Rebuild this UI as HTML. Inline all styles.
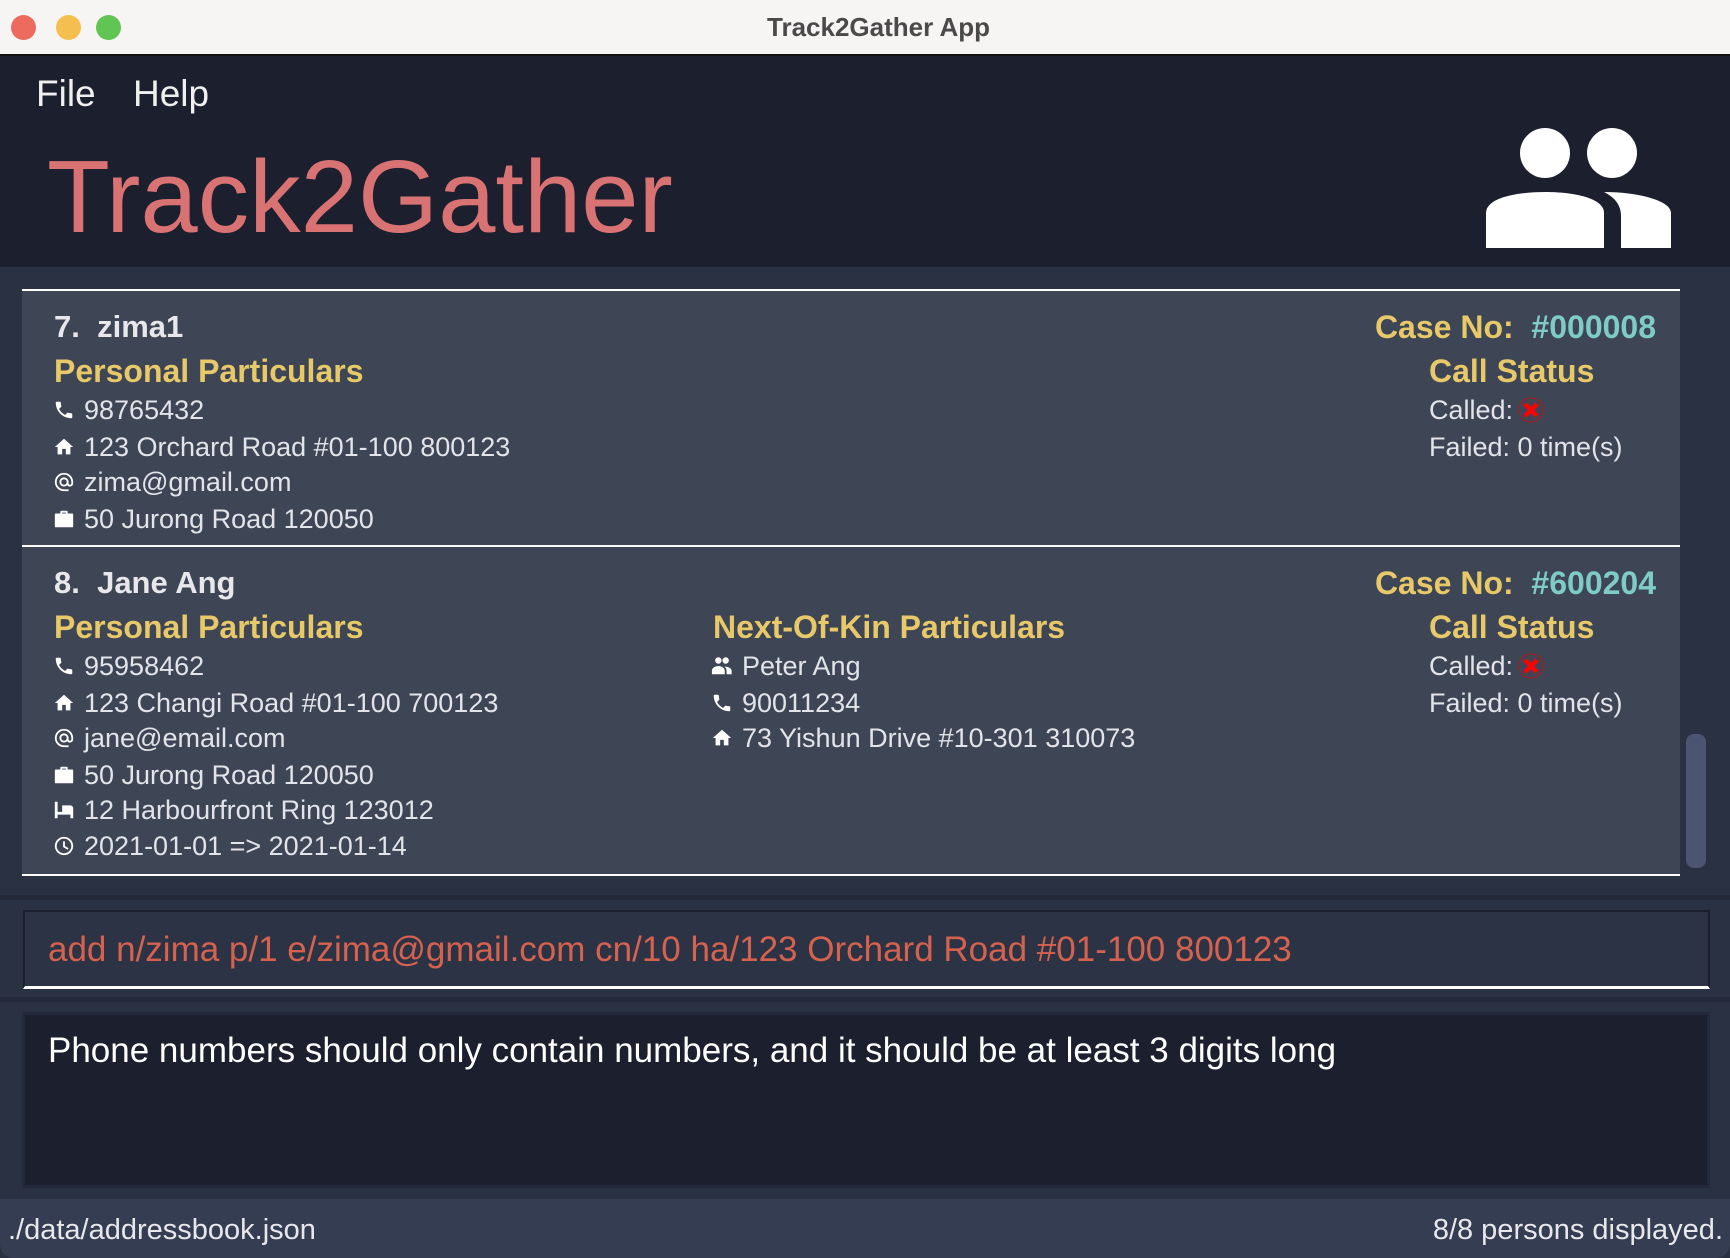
<!DOCTYPE html>
<html><head><meta charset="utf-8"><style>
*{margin:0;padding:0;box-sizing:border-box}
body{width:1730px;height:1258px;background:#2a3142;font-family:"Liberation Sans",sans-serif;position:relative;overflow:hidden}
.a{position:absolute;white-space:nowrap}
.t{color:#e2e4ea;font-size:27px;line-height:36px}
.h{color:#e8c96a;font-size:32px;font-weight:bold;line-height:40px}
.n{color:#e8e8ec;font-size:31px;font-weight:bold;line-height:40px}
svg.i{position:absolute;width:22px;height:22px;fill:#fff}
</style></head><body>
<div class="a" style="left:0;top:0;width:1730px;height:56px;background:#f7f4f4;border-bottom:2px solid #111"></div>
<div class="a" style="left:11px;top:15px;width:25px;height:25px;border-radius:50%;background:#ec6a5e"></div>
<div class="a" style="left:56px;top:15px;width:25px;height:25px;border-radius:50%;background:#f4bf4f"></div>
<div class="a" style="left:96px;top:15px;width:25px;height:25px;border-radius:50%;background:#61c554"></div>
<div class="a" style="left:767px;top:11px;font-size:26px;font-weight:bold;color:#4a4a4a;line-height:32px">Track2Gather App</div>
<div class="a" style="left:0;top:56px;width:1730px;height:211px;background:#1b1f2e"></div>
<div class="a" style="left:36px;top:72px;font-size:37px;color:#f0f0f0;line-height:44px">File</div>
<div class="a" style="left:133px;top:72px;font-size:37px;color:#f0f0f0;line-height:44px">Help</div>
<div class="a" style="left:47px;top:137px;font-size:103px;color:#d97373;line-height:120px;letter-spacing:0">Track2Gather</div>
<svg class="a" style="left:1486px;top:128px" width="185" height="120" viewBox="0 0 185 120">
<circle cx="59" cy="25" r="25" fill="#fff"/><circle cx="126" cy="25" r="25" fill="#fff"/>
<path d="M0 120V85C0 70 30 64 59 64C88 64 118 70 118 85V120Z" fill="#fff"/>
<path d="M135 120V88C135 78 130 70 118 64C150 64 185 72 185 85V120Z" fill="#fff"/>
</svg>
<div class="a" style="left:22px;top:290px;width:1658px;height:586px;background:#3e4555"></div>
<div class="a" style="left:22px;top:289px;width:1658px;height:2px;background:#fff"></div>
<div class="a" style="left:22px;top:545px;width:1658px;height:2px;background:#fff"></div>
<div class="a" style="left:22px;top:874px;width:1658px;height:2px;background:#fff"></div>
<div class="a" style="left:1686px;top:734px;width:20px;height:134px;border-radius:8px;background:#4b5470"></div>

<div class="a n" style="left:54px;top:307px">7.&nbsp; zima1</div>
<div class="a h" style="left:54px;top:351px">Personal Particulars</div>
<div class="a t" style="left:84px;top:392px">98765432</div>
<div class="a t" style="left:84px;top:429px">123 Orchard Road #01-100 800123</div>
<div class="a t" style="left:84px;top:464px">zima@gmail.com</div>
<div class="a t" style="left:84px;top:501px">50 Jurong Road 120050</div>

<div class="a h" style="right:74px;top:307px">Case No:&nbsp; <span style="color:#7fcbc6">#000008</span></div>
<div class="a h" style="left:1429px;top:351px">Call Status</div>
<div class="a t" style="left:1429px;top:392px">Called:</div>
<div class="a t" style="left:1429px;top:429px">Failed: 0 time(s)</div>

<div class="a n" style="left:54px;top:563px">8.&nbsp; Jane Ang</div>
<div class="a h" style="left:54px;top:607px">Personal Particulars</div>
<div class="a t" style="left:84px;top:648px">95958462</div>
<div class="a t" style="left:84px;top:685px">123 Changi Road #01-100 700123</div>
<div class="a t" style="left:84px;top:720px">jane@email.com</div>
<div class="a t" style="left:84px;top:757px">50 Jurong Road 120050</div>
<div class="a t" style="left:84px;top:792px">12 Harbourfront Ring 123012</div>
<div class="a t" style="left:84px;top:828px">2021-01-01 =&gt; 2021-01-14</div>

<div class="a h" style="left:713px;top:607px">Next-Of-Kin Particulars</div>
<div class="a t" style="left:742px;top:648px">Peter Ang</div>
<div class="a t" style="left:742px;top:685px">90011234</div>
<div class="a t" style="left:742px;top:720px">73 Yishun Drive #10-301 310073</div>

<div class="a h" style="right:74px;top:563px">Case No:&nbsp; <span style="color:#7fcbc6">#600204</span></div>
<div class="a h" style="left:1429px;top:607px">Call Status</div>
<div class="a t" style="left:1429px;top:648px">Called:</div>
<div class="a t" style="left:1429px;top:685px">Failed: 0 time(s)</div>

<svg class="a" style="left:1518px;top:397px" width="26" height="26" viewBox="0 0 26 26"><circle cx="13" cy="13" r="12" fill="none" stroke="#e00" stroke-width="1" stroke-dasharray="2 1"/><path d="M7 7L19 19M19 7L7 19" stroke="#f00" stroke-width="4.5"/></svg>
<svg class="a" style="left:1518px;top:653px" width="26" height="26" viewBox="0 0 26 26"><circle cx="13" cy="13" r="12" fill="none" stroke="#e00" stroke-width="1" stroke-dasharray="2 1"/><path d="M7 7L19 19M19 7L7 19" stroke="#f00" stroke-width="4.5"/></svg>

<svg class="i" style="left:53px;top:399px" viewBox="0 0 24 24"><path d="M6.6 10.8c1.4 2.8 3.8 5.1 6.6 6.6l2.2-2.2c.3-.3.7-.4 1-.2 1.1.4 2.3.6 3.6.6.6 0 1 .4 1 1V20c0 .6-.4 1-1 1C10.6 21 3 13.4 3 4c0-.6.4-1 1-1h3.5c.6 0 1 .4 1 1 0 1.3.2 2.5.6 3.6.1.3 0 .7-.2 1z"/></svg>
<svg class="i" style="left:53px;top:436px" viewBox="0 0 24 24"><path d="M10 20v-6h4v6h5v-8h3L12 3 2 12h3v8z"/></svg>
<svg class="i" style="left:53px;top:471px" viewBox="0 0 24 24"><path d="M12 2a10 10 0 100 20h5v-2h-5a8 8 0 118-8v1.4c0 .8-.7 1.6-1.5 1.6S17 14.2 17 13.4V12a5 5 0 10-1.5 3.5c.6.9 1.8 1.5 3 1.5 2 0 3.5-1.6 3.5-3.6V12A10 10 0 0012 2zm0 13a3 3 0 110-6 3 3 0 010 6z"/></svg>
<svg class="i" style="left:53px;top:508px" viewBox="0 0 24 24"><path d="M9 3h6a1 1 0 011 1v2h5a1 1 0 011 1v13a1 1 0 01-1 1H3a1 1 0 01-1-1V7a1 1 0 011-1h5V4a1 1 0 011-1zm1 3h4V5h-4z"/></svg>
<svg class="i" style="left:53px;top:655px" viewBox="0 0 24 24"><path d="M6.6 10.8c1.4 2.8 3.8 5.1 6.6 6.6l2.2-2.2c.3-.3.7-.4 1-.2 1.1.4 2.3.6 3.6.6.6 0 1 .4 1 1V20c0 .6-.4 1-1 1C10.6 21 3 13.4 3 4c0-.6.4-1 1-1h3.5c.6 0 1 .4 1 1 0 1.3.2 2.5.6 3.6.1.3 0 .7-.2 1z"/></svg>
<svg class="i" style="left:53px;top:692px" viewBox="0 0 24 24"><path d="M10 20v-6h4v6h5v-8h3L12 3 2 12h3v8z"/></svg>
<svg class="i" style="left:53px;top:727px" viewBox="0 0 24 24"><path d="M12 2a10 10 0 100 20h5v-2h-5a8 8 0 118-8v1.4c0 .8-.7 1.6-1.5 1.6S17 14.2 17 13.4V12a5 5 0 10-1.5 3.5c.6.9 1.8 1.5 3 1.5 2 0 3.5-1.6 3.5-3.6V12A10 10 0 0012 2zm0 13a3 3 0 110-6 3 3 0 010 6z"/></svg>
<svg class="i" style="left:53px;top:764px" viewBox="0 0 24 24"><path d="M9 3h6a1 1 0 011 1v2h5a1 1 0 011 1v13a1 1 0 01-1 1H3a1 1 0 01-1-1V7a1 1 0 011-1h5V4a1 1 0 011-1zm1 3h4V5h-4z"/></svg>
<svg class="i" style="left:53px;top:799px" viewBox="0 0 24 24"><path d="M2 3h3v11h5V7h9a3 3 0 013 3v11h-3v-4H5v4H2z"/><rect x="6" y="6" width="3" height="6" rx="1.5" fill="#3e4555"/></svg>
<svg class="i" style="left:53px;top:835px" viewBox="0 0 24 24"><path d="M12 2a10 10 0 110 20 10 10 0 010-20zm0 2a8 8 0 100 16 8 8 0 000-16zm-1 3h2v5l4 2.5-1 1.6-5-3z"/></svg>
<svg class="i" style="left:711px;top:655px" viewBox="0 0 24 24"><circle cx="8" cy="6" r="3.5"/><circle cx="16" cy="6" r="3.5"/><path d="M1 21v-4c0-3 4-5 7-5s7 2 7 5v4zM17 21v-4c0-2-1-3.5-2.5-4.5 3 0 8 1.5 8 4.5v4z"/></svg>
<svg class="i" style="left:711px;top:692px" viewBox="0 0 24 24"><path d="M6.6 10.8c1.4 2.8 3.8 5.1 6.6 6.6l2.2-2.2c.3-.3.7-.4 1-.2 1.1.4 2.3.6 3.6.6.6 0 1 .4 1 1V20c0 .6-.4 1-1 1C10.6 21 3 13.4 3 4c0-.6.4-1 1-1h3.5c.6 0 1 .4 1 1 0 1.3.2 2.5.6 3.6.1.3 0 .7-.2 1z"/></svg>
<svg class="i" style="left:711px;top:727px" viewBox="0 0 24 24"><path d="M10 20v-6h4v6h5v-8h3L12 3 2 12h3v8z"/></svg>

<div class="a" style="left:0;top:895px;width:1730px;height:5px;background:#232938"></div>
<div class="a" style="left:0;top:997px;width:1730px;height:5px;background:#232938"></div>
<div class="a" style="left:23px;top:910px;width:1687px;height:79px;border:2px solid #1b1f2e;border-bottom:3px solid #fff;background:#2c3345"></div>
<div class="a" style="left:48px;top:929px;font-size:35px;color:#d5624e;line-height:42px">add n/zima p/1 e/zima@gmail.com cn/10 ha/123 Orchard Road #01-100 800123</div>
<div class="a" style="left:22px;top:1012px;width:1688px;height:176px;border:3px solid #242a3b;background:#1b1f2e"></div>
<div class="a" style="left:48px;top:1030px;font-size:35px;color:#fff;line-height:42px">Phone numbers should only contain numbers, and it should be at least 3 digits long</div>
<div class="a" style="left:0;top:1199px;width:1730px;height:59px;background:#353d52;border-radius:0 0 14px 14px"></div>
<div class="a" style="left:8px;top:1212px;font-size:29px;color:#e8e8ec;line-height:36px">./data/addressbook.json</div>
<div class="a" style="right:7px;top:1212px;font-size:29px;color:#e8e8ec;line-height:36px">8/8 persons displayed.</div>
</body></html>
